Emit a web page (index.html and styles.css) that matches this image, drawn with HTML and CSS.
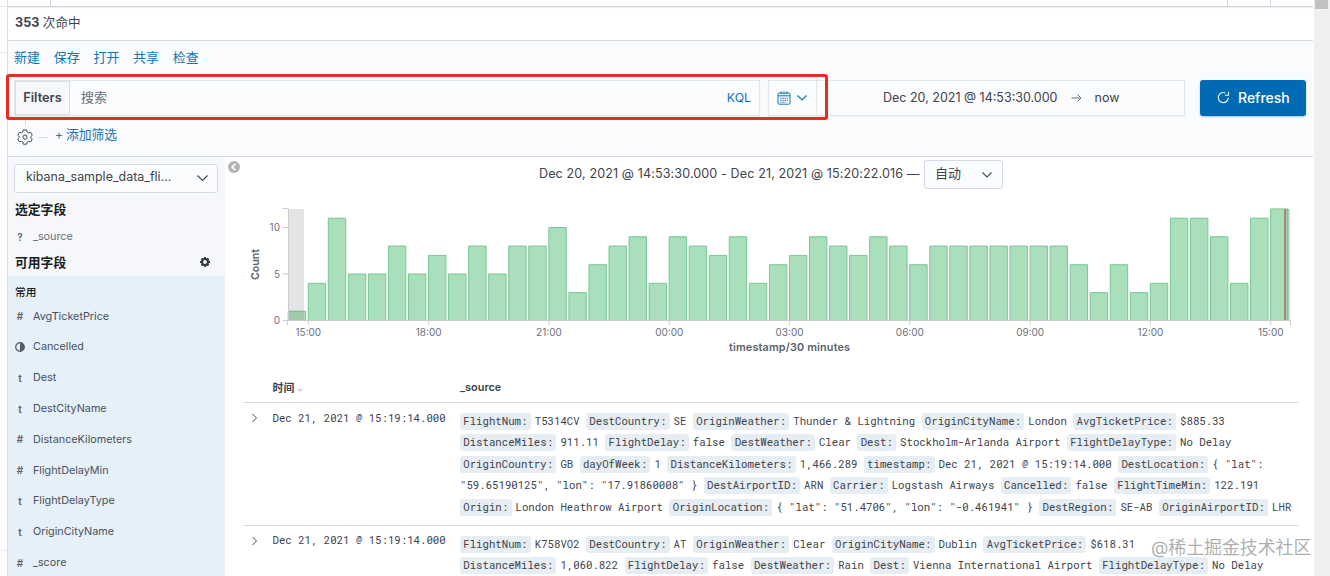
FILE: index.html
```html
<!DOCTYPE html>
<html lang="zh-CN">
<head>
    <meta charset="UTF-8">
    <meta name="viewport" content="width=device-width, initial-scale=1.0">
    <title>Discover - Kibana</title>
    <link rel="stylesheet" href="styles.css">
</head>
<body>
    <div class="app">
        <div class="nav-edge"><span></span><span></span></div>

        <main class="page">
            <div class="tabs"><span class="tab-first"></span><span class="tab-mid"></span><span class="tab-last"></span></div>
            <div class="hits"><b>353</b>&nbsp;<span>次命中</span></div>

            <header class="top">
                <nav class="menu">
                    <a>新建</a><a>保存</a><a>打开</a><a>共享</a><a>检查</a>
                </nav>
                <div class="query-row">
                    <div class="query">
                        <span class="filters">Filters</span>
                        <span class="placeholder">搜索</span>
                        <span class="kql">KQL</span>
                    </div>
                    <div class="dates">
                        <div class="quick">
                            <svg width="14" height="14" viewBox="0 0 14 14" fill="none" stroke="#1274b8">
                                <rect x="1" y="2" width="12" height="11.2" rx="1.2"/>
                                <path d="M1 4.8h12M4 .4v2.8M7 .4v2.8M10 .4v2.8"/>
                                <path d="M3.2 7.2h7.6M3.2 9.2h7.6M3.2 11.2h5.4" stroke-dasharray="1.4 .8"/>
                            </svg>
                            <svg width="12" height="8" viewBox="0 0 12 8" fill="none" stroke="#1274b8" stroke-width="1.1"><path d="M1.5 1.5 6 6l4.5-4.5"/></svg>
                        </div>
                        <div class="range">
                            <span class="from">Dec 20, 2021 @ 14:53:30.000</span>
                            <svg width="11" height="10" viewBox="0 0 11 10" fill="none" stroke="#69707d"><path d="M.5 5H10M6.5 1.5 10 5 6.5 8.5"/></svg>
                            <span class="to">now</span>
                        </div>
                    </div>
                    <button class="refresh">
                        <svg width="13" height="13" viewBox="0 0 13 13" fill="none" stroke="#fff" stroke-width="1.1"><path d="M11.3 6.8A5 5 0 1 1 8.3 2M11.5.8v3.5H8"/></svg>
                        <span>Refresh</span>
                    </button>
                </div>
                <div class="filter-row">
                    <div class="gear">
                        <span></span>
                        <svg width="16" height="16" viewBox="0 0 16 16" fill="none" stroke="#404754" stroke-linejoin="round">
                            <path d="M6.3 1h3.4l.5 2.1 1.3.8 2.1-.6 1.7 2.9-1.6 1.5v.9l1.6 1.4-1.7 2.9-2.1-.6-1.3.8-.5 2.1H6.3l-.5-2.1-1.3-.8-2.1.6L.7 10l1.6-1.4v-.9L.7 6.2l1.7-2.9 2.1.6 1.3-.8z"/>
                            <circle cx="8" cy="8.1" r="2.1"/>
                        </svg>
                    </div>
                    <span class="dash"></span>
                    <a class="add-filter"><i>+</i>添加筛选</a>
                </div>
            </header>

            <div class="discover">
                <aside class="sidebar">
                    <div class="select index-select">
                        <span>kibana_sample_data_fli...</span>
                        <svg width="13" height="8" viewBox="0 0 13 8" fill="none" stroke="#404754" stroke-width="1.1"><path d="M1.5 1.5l5 5 5-5"/></svg>
                    </div>
                    <h3 class="selected-title">选定字段</h3>
                    <div class="field muted"><b>?</b>_source</div>
                    <h3 class="available-title">可用字段
                        <svg width="10" height="10" viewBox="0 0 10 10" stroke="#343741" stroke-width="2"><circle cx="5" cy="5" r="2.9" fill="none"/><path d="M5 0v1.8M5 8.2V10M0 5h1.8M8.2 5H10M1.5 1.5l1.2 1.2M7.3 7.3l1.2 1.2M1.5 8.5l1.2-1.2M7.3 2.7l1.2-1.2"/></svg>
                    </h3>
                    <div class="popular">
                        <h4>常用</h4>
                        <div class="field"><b>#</b>AvgTicketPrice</div>
                        <div class="field"><b><svg width="10" height="10" viewBox="0 0 10 10"><circle cx="5" cy="5" r="4.3" fill="none" stroke="#535966" stroke-width="1.2"/><path d="M5 .7a4.3 4.3 0 0 1 0 8.6z" fill="#535966"/></svg></b>Cancelled</div>
                        <div class="field"><b>t</b>Dest</div>
                        <div class="field"><b>t</b>DestCityName</div>
                        <div class="field"><b>#</b>DistanceKilometers</div>
                        <div class="field"><b>#</b>FlightDelayMin</div>
                        <div class="field"><b>t</b>FlightDelayType</div>
                        <div class="field"><b>t</b>OriginCityName</div>
                        <div class="field"><b>#</b>_score</div>
                    </div>
                </aside>

                <section class="content">
                    <div class="collapse">
                        <svg width="12" height="12" viewBox="0 0 12 12"><circle cx="6" cy="6" r="6" fill="#b4b4b4"/><path d="M7.3 2.8 4.2 6l3.1 3.2" fill="none" stroke="#fff" stroke-width="1.7"/></svg>
                    </div>
                    <div class="interval">
                        <span class="interval-text">Dec 20, 2021 @ 14:53:30.000 - Dec 21, 2021 @ 15:20:22.016 —</span>
                        <div class="select interval-select">
                            <span>自动</span>
                            <svg width="12" height="8" viewBox="0 0 12 8" fill="none" stroke="#404754" stroke-width="1.1"><path d="M1.5 1.5 6 6l4.5-4.5"/></svg>
                        </div>
                    </div>
                    <svg class="chart" id="chart" width="1088" height="164" viewBox="225 196 1088 164"></svg>

                    <div class="doc-table">
                        <div class="row head">
                            <span></span>
                            <span class="time-head">时间<i></i></span>
                            <span>_source</span>
                        </div>
                        <div class="row">
                            <svg class="expand" width="7" height="10" viewBox="0 0 7 10" fill="none" stroke="#404754"><path d="M1.5 1l4 4-4 4"/></svg>
                            <time>Dec 21, 2021 @ 15:19:14.000</time>
                            <div class="source">
                                <p><mark>FlightNum:</mark>T5314CV <mark>DestCountry:</mark>SE <mark>OriginWeather:</mark>Thunder &amp; Lightning <mark>OriginCityName:</mark>London <mark>AvgTicketPrice:</mark>$885.33</p>
                                <p><mark>DistanceMiles:</mark>911.11 <mark>FlightDelay:</mark>false <mark>DestWeather:</mark>Clear <mark>Dest:</mark>Stockholm-Arlanda Airport <mark>FlightDelayType:</mark>No Delay</p>
                                <p><mark>OriginCountry:</mark>GB <mark>dayOfWeek:</mark>1 <mark>DistanceKilometers:</mark>1,466.289 <mark>timestamp:</mark>Dec 21, 2021 @ 15:19:14.000 <mark>DestLocation:</mark>{ "lat":</p>
                                <p>"59.65190125", "lon": "17.91860008" } <mark>DestAirportID:</mark>ARN <mark>Carrier:</mark>Logstash Airways <mark>Cancelled:</mark>false <mark>FlightTimeMin:</mark>122.191</p>
                                <p><mark>Origin:</mark>London Heathrow Airport <mark>OriginLocation:</mark>{ "lat": "51.4706", "lon": "-0.461941" } <mark>DestRegion:</mark>SE-AB <mark>OriginAirportID:</mark>LHR</p>
                            </div>
                        </div>
                        <div class="row">
                            <svg class="expand" width="7" height="10" viewBox="0 0 7 10" fill="none" stroke="#404754"><path d="M1.5 1l4 4-4 4"/></svg>
                            <time>Dec 21, 2021 @ 15:19:14.000</time>
                            <div class="source">
                                <p><mark>FlightNum:</mark>K758VO2 <mark>DestCountry:</mark>AT <mark>OriginWeather:</mark>Clear <mark>OriginCityName:</mark>Dublin <mark>AvgTicketPrice:</mark>$618.31</p>
                                <p><mark>DistanceMiles:</mark>1,060.822 <mark>FlightDelay:</mark>false <mark>DestWeather:</mark>Rain <mark>Dest:</mark>Vienna International Airport <mark>FlightDelayType:</mark>No Delay</p>
                            </div>
                        </div>
                    </div>
                </section>
            </div>
        </main>

        <div class="scrollbar"><span></span></div>
        <div class="highlight"></div>
        <div class="watermark">@稀土掘金技术社区</div>
    </div>

    <script>
        // Documents per 30 minutes
        const counts = [1, 4, 11, 5, 5, 8, 5, 7, 5, 8, 5, 8, 8, 10, 3, 6, 8, 9, 4, 9, 8, 7, 9, 4, 6,
            7, 9, 8, 7, 9, 8, 6, 8, 8, 8, 8, 8, 8, 8, 6, 3, 6, 3, 4, 11, 11, 9, 4, 11, 12];
        const left = 288, base = 320.5, step = 20.05, unit = 9.3;
        let out = '';

        counts.forEach((n, i) => {
            const x = left + i * step + 0.2;
            const y = base - n * unit;
            out += `<path class="bar" d="M${x} ${base}V${y}h17.4V${base}"/>`;
        });

        // Partial buckets and the current time marker
        out += `<rect class="partial" x="288" y="209" width="16" height="111.5"/>`;
        out += `<rect class="partial" x="1286" y="209" width="4.5" height="111.5"/>`;
        out += `<path class="now" d="M1285 209v111.5"/>`;

        // Axes
        out += `<path class="axis" d="M282.5 208.5h6v112M282.5 227.5h6M282.5 274h6M282.5 320.5h1008v5M287.5 320.5v5"/>`;
        [[10, 227.5], [5, 274], [0, 320.5]].forEach(([label, y]) => {
            out += `<text x="280" y="${y + 3.5}" text-anchor="end">${label}</text>`;
        });
        ['15:00', '18:00', '21:00', '00:00', '03:00', '06:00', '09:00', '12:00', '15:00'].forEach((label, i) => {
            const x = left + step * (1 + i * 6) + 0.3;
            out += `<path class="axis" d="M${x} 320.5v4.5"/><text x="${x}" y="336" text-anchor="middle">${label}</text>`;
        });
        out += `<text class="title" x="789.5" y="351" text-anchor="middle" textLength="121">timestamp/30 minutes</text>`;
        out += `<text class="title" transform="translate(259 264.5) rotate(-90)" text-anchor="middle" textLength="31">Count</text>`;

        document.getElementById('chart').innerHTML = out;
    </script>
</body>
</html>
```

FILE: styles.css
```css
* {
    box-sizing: border-box;
}
body {
    margin: 0;
    overflow: hidden;
    font-family: Inter, "Noto Sans CJK SC", sans-serif;
    font-size: 12.6px;
    color: #40434c;
    background: #fff;
}
h3, h4, p {
    margin: 0;
}
i {
    font-style: normal;
}
svg {
    flex: none;
}
.app {
    display: flex;
    position: relative;
    height: 576px;
    overflow: hidden;
}
.nav-edge {
    width: 8px;
    flex: none;
    padding-top: 6px;
    border-right: 1px solid #d8dde6;
}
.nav-edge span {
    display: block;
    height: 46px;
    border-top: 1px solid #dfe2e8;
}
.nav-edge span + span {
    height: 499px;
    border-bottom: 1px solid #e8ebf0;
}
.page {
    width: 1305px;
    flex: none;
}
.tabs {
    display: flex;
    height: 7px;
    border-bottom: 1px solid #cfd3da;
    box-shadow: 0 1px 1px #eceef2;
}
.tabs span {
    border-right: 1px solid #d3d6dd;
}
.tab-first {
    width: 43px;
}
.tab-mid {
    width: 1177px;
}
.tab-last {
    width: 43px;
}
.hits {
    display: flex;
    align-items: center;
    height: 34px;
    padding: 0 0 4px 7px;
    border-bottom: 1px solid #d3dae6;
}
.hits b {
    font-weight: 700;
    font-size: 12.6px;
    padding-top: 1px;
}
.top {
    height: 116px;
    padding: 5px 7px 0 6px;
    background: #fafbfd;
    border-bottom: 1px solid #d3dae6;
}
.menu {
    display: flex;
    gap: 13.7px;
    height: 34px;
    line-height: 22px;
    font-size: 13px;
}
.menu a, .add-filter {
    color: #1274b8;
}
.query-row {
    display: flex;
    height: 36px;
}
.query {
    display: flex;
    align-items: center;
    width: 746px;
    padding-bottom: 1px;
    background: #fbfcfd;
    border: 1px solid #e1e5ec;
    box-shadow: 0 1px 1px #eef0f4;
}
.filters {
    width: 55px;
    height: 34px;
    line-height: 32px;
    font-weight: 600;
    font-size: 12.8px;
    text-align: center;
    background: #f5f7fa;
    border: 1px solid #d9dee6;
}
.placeholder {
    flex: 1;
    padding: 0 0 2px 11px;
    font-size: 13px;
    color: #69707d;
}
.kql {
    padding-right: 8px;
    font-size: 12.3px;
    color: #1274b8;
}
.dates {
    display: flex;
    width: 417px;
    margin-left: 8px;
    background: #fbfcfd;
    border: 1px solid #e1e5ec;
    box-shadow: 0 1px 1px #eef0f4;
}
.quick {
    display: flex;
    align-items: center;
    gap: 5px;
    width: 48px;
    padding-left: 8px;
    border-right: 1px solid #e1e5ec;
}
.range {
    display: flex;
    align-items: center;
    padding: 0 0 1px 66px;
    font-size: 12.5px;
}
.range svg {
    margin: 1px 13px 0 13px;
}
.refresh {
    display: flex;
    align-items: center;
    gap: 8px;
    width: 106px;
    margin-left: 15px;
    padding: 0 0 1px 17px;
    font: 500 14px Inter, sans-serif;
    color: #fff;
    background: #006bb4;
    border: 0;
    border-radius: 3px;
    box-shadow: 0 1px 2px #9fc0da;
}
.filter-row {
    display: flex;
    align-items: center;
    height: 40px;
    padding-left: 3px;
}
.gear {
    display: flex;
    flex-direction: column;
    align-items: center;
    height: 36px;
}
.gear span {
    height: 7px;
    margin-bottom: 4px;
    border-left: 1px solid #d3dae6;
}
.dash {
    width: 10px;
    margin: 2px 7px 0 5px;
    border-top: 1px solid #d3dae6;
}
.add-filter {
    margin-bottom: 5px;
    font-size: 12.8px;
}
.add-filter i {
    margin-right: 3px;
    font-size: 12px;
}
.discover {
    display: flex;
    height: 419px;
}
.sidebar {
    width: 217px;
    flex: none;
    padding-top: 7px;
    background: #f5f7fa;
}
.select {
    display: flex;
    align-items: center;
    justify-content: space-between;
    background: #fbfcfd;
    border: 1px solid #d3dae6;
    border-radius: 3px;
}
.index-select {
    width: 204px;
    height: 29px;
    margin-left: 6px;
    padding: 0 8px 4px 11px;
    font-size: 12.45px;
}
.index-select svg {
    margin-top: 3px;
}
h3 {
    padding-left: 7px;
    font-size: 12.8px;
    font-weight: 700;
    color: #1a1c21;
}
.selected-title {
    height: 30px;
    line-height: 33px;
}
.field {
    display: flex;
    align-items: center;
    height: 30.8px;
    font-size: 10.8px;
    color: #4b515d;
}
.field b {
    width: 10px;
    margin: 0 8px 0 7px;
    font-weight: 600;
    font-size: 10px;
    text-align: center;
    color: #5c626e;
}
.field b svg {
    display: block;
}
.muted {
    height: 27px;
    color: #69707d;
}
.available-title {
    display: flex;
    align-items: center;
    justify-content: space-between;
    height: 26px;
    padding: 0 15px 3px 7px;
}
.popular {
    height: 300px;
    padding-top: 8px;
    background: #e6f0f8;
}
h4 {
    height: 16.8px;
    padding-left: 7px;
    line-height: 18px;
    font-size: 10.7px;
    font-weight: 500;
    color: #1a1c21;
}
.content {
    position: relative;
    width: 1088px;
}
.collapse {
    position: absolute;
    left: 3px;
    top: 4px;
}
.interval {
    display: flex;
    align-items: center;
    height: 39px;
    padding: 0 0 4px 314px;
}
.interval-text {
    width: 381px;
    padding-bottom: 2px;
    font-size: 12.55px;
    letter-spacing: 0.12px;
    white-space: nowrap;
}
.interval-select {
    width: 79px;
    height: 29px;
    margin-left: 4px;
    padding: 0 9px 4px 10px;
    font-size: 13px;
}
.interval-select svg {
    margin-top: 5px;
}
.chart {
    display: block;
}
.chart text {
    font-size: 10px;
    fill: #69707d;
}
.chart .title {
    font-weight: 600;
    font-size: 10.8px;
    fill: #5a606b;
}
.bar {
    fill: #a9dfbb;
    stroke: #7ac796;
}
.partial {
    fill: rgba(105, 105, 105, 0.18);
}
.now {
    stroke: #a8705f;
    stroke-width: 2;
    opacity: 0.75;
}
.axis {
    fill: none;
    stroke: #c9ccd2;
}
.doc-table {
    width: 1055px;
    margin-left: 19px;
}
.row {
    display: grid;
    grid-template-columns: 28.5px 187.5px 1fr;
    height: 123px;
    border-bottom: 1px solid #d3dae6;
}
.head {
    align-items: center;
    height: 43px;
    padding-top: 11px;
    font-size: 10.9px;
    font-weight: 600;
}
.time-head i {
    display: inline-block;
    margin-left: 3px;
    border: 3px solid transparent;
    border-top-color: #cdd2da;
    border-bottom: 0;
}
.expand {
    margin: 10px 0 0 7px;
}
time {
    padding-top: 6px;
    line-height: 18px;
}
time, .source {
    font-family: "Roboto Mono", "Liberation Mono", monospace;
    font-size: 10.7px;
    white-space: nowrap;
}
.row + .row + .row time {
    padding-top: 5px;
}
.source {
    padding-top: 7.8px;
}
.source p {
    height: 21.5px;
    line-height: 21.5px;
}
mark {
    display: inline-block;
    height: 17px;
    line-height: 17px;
    margin-right: 4px;
    padding: 0 3.3px;
    color: #40434c;
    background: #e6edf3;
    border-radius: 3px;
}
.scrollbar {
    width: 16px;
    margin-left: 1px;
    background: #f0f0f0;
}
.scrollbar span {
    display: block;
    width: 13px;
    height: 9px;
    margin-left: 1px;
    background: #c1c1c1;
}
.highlight {
    position: absolute;
    left: 6px;
    top: 74px;
    width: 822px;
    height: 46px;
    border: 3px solid #ec2b20;
    border-radius: 3px;
}
.watermark {
    position: absolute;
    left: 1151px;
    top: 535px;
    font-size: 17.9px;
    line-height: 26px;
    white-space: nowrap;
    color: rgba(120, 120, 120, 0.6);
    text-shadow: 0 0 1px #fff;
}
```
